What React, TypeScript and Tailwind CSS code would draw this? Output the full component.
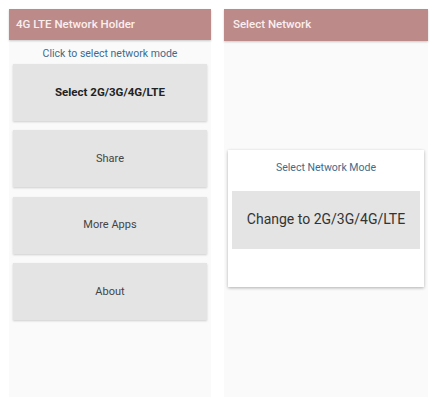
import React from "react";

const font = { fontFamily: "Roboto, 'Noto Sans', sans-serif" };

function MenuButton({ label, bold }: { label: string; bold?: boolean }) {
  return (
    <div
      className={`flex h-[57px] items-center justify-center bg-[#e4e4e4] shadow-[0_1px_2px_rgba(0,0,0,0.18)] ${
        bold ? "text-[11.5px] font-bold text-[#222]" : "text-[11px] text-[#444]"
      }`}
    >
      {label}
    </div>
  );
}

export default function App() {
  return (
    <div className="flex h-[410px] w-[437px] gap-[13px] bg-white pl-[9px] pt-[9px]" style={font}>
      {/* main screen */}
      <div className="flex h-[388px] w-[202px] flex-col bg-[#fafafa]">
        <div className="flex h-[31px] items-center bg-[#bb8a89] px-[7px] text-[11.5px] font-medium text-[#fbeeee] shadow-[0_1px_2px_rgba(0,0,0,0.2)]">
          4G LTE Network Holder
        </div>
        <div className="mt-[6px] text-center text-[10.5px] text-[#3e6b8c]">
          Click to select network mode
        </div>
        <div className="mt-[2px] flex flex-col gap-[9.5px] px-[4px]">
          <MenuButton label="Select 2G/3G/4G/LTE" bold />
          <MenuButton label="Share" />
          <MenuButton label="More Apps" />
          <MenuButton label="About" />
        </div>
      </div>

      {/* select network screen */}
      <div className="flex h-[388px] w-[204px] flex-col bg-[#fafafa]">
        <div className="flex h-[32px] items-center bg-[#bb8a89] px-[9px] text-[11.5px] font-medium text-[#fbeeee] shadow-[0_1px_2px_rgba(0,0,0,0.2)]">
          Select Network
        </div>
        <div className="mx-[4px] mt-[109px] flex h-[137px] flex-col bg-white shadow-[0_1px_3px_rgba(0,0,0,0.3)]">
          <div className="mt-[10px] text-center text-[10.5px] text-[#3e6b8c]">
            Select Network Mode
          </div>
          <div className="mx-[4px] mt-[15px] flex h-[58px] items-center justify-center bg-[#e4e4e4] text-[14px] text-[#333]">
            Change to 2G/3G/4G/LTE
          </div>
        </div>
      </div>
    </div>
  );
}
